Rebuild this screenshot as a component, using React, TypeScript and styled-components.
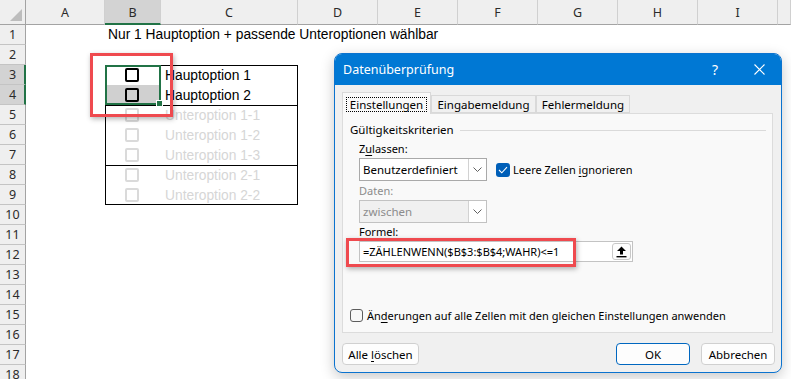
import React from 'react';
import styled, { createGlobalStyle, css } from 'styled-components';

const GlobalStyle = createGlobalStyle`
  html, body { margin: 0; padding: 0; background: #fff; overflow: hidden; }
  #root { width: 791px; height: 379px; }
`;

const Screen = styled.div`
  position: relative;
  width: 791px;
  height: 379px;
  overflow: hidden;
  background: #fff;
`;

/* ---------------- Spreadsheet ---------------- */

const Sheet = styled.div`
  display: grid;
  grid-template-columns: 26px 79px 56px 137px repeat(6, 80px) 1fr;
  grid-template-rows: 25px repeat(18, 20px);
  font-family: "Liberation Sans", Arial, sans-serif;
`;

const headerBase = css`
  box-sizing: border-box;
  display: flex;
  align-items: center;
  justify-content: center;
  font-family: "Noto Sans", "Open Sans", sans-serif;
  font-size: 12.5px;
  color: #2b2b2b;
`;

const Corner = styled.div`
  ${headerBase};
  grid-row: 1;
  grid-column: 1;
  position: relative;
  background: #efefef;
  border-right: 1px solid #a3a3a3;
  border-bottom: 1px solid #a3a3a3;
  &::after {
    content: '';
    position: absolute;
    right: 3px;
    bottom: 3px;
    width: 12px;
    height: 12px;
    background: #bdbdbd;
    clip-path: polygon(100% 0, 100% 100%, 0 100%);
  }
`;

const ColHeader = styled.div<{ $col: number; $active?: boolean }>`
  ${headerBase};
  grid-row: 1;
  grid-column: ${(p) => p.$col};
  background: ${(p) => (p.$active ? '#d3d3d3' : '#efefef')};
  border-right: 1px solid #d0d0d0;
  border-bottom: ${(p) => (p.$active ? '2px solid #217346' : '1px solid #a3a3a3')};
  padding-top: ${(p) => (p.$active ? '1px' : '0')};
`;

const RowHeader = styled.div<{ $row: number; $active?: boolean }>`
  ${headerBase};
  grid-row: ${(p) => p.$row};
  grid-column: 1;
  background: ${(p) => (p.$active ? '#d3d3d3' : '#efefef')};
  border-bottom: 1px solid #c4c4c4;
  border-right: ${(p) => (p.$active ? '2px solid #217346' : '1px solid #a3a3a3')};
  padding-left: ${(p) => (p.$active ? '1px' : '0')};
  font-size: 12.5px;
`;

const TitleCell = styled.div`
  grid-row: 2;
  grid-column: 3;
  white-space: nowrap;
  padding-left: 3px;
  font-size: 13.8px;
  line-height: 20px;
  color: #000;
`;

const TableBlock = styled.div`
  grid-row: 4 / 11;
  grid-column: 3 / 5;
  display: flex;
  flex-direction: column;
  outline: 1px solid #000;
  outline-offset: -1px;
`;

const Group = styled.div<{ $first?: boolean }>`
  display: flex;
  flex-direction: column;
  box-shadow: ${(p) => (p.$first ? 'none' : 'inset 0 1px 0 #000')};
`;

const OptionRow = styled.div`
  display: grid;
  grid-template-columns: 56px 1fr;
  height: 20px;
  align-items: center;
`;

const BoxCell = styled.div<{ $shaded?: boolean }>`
  height: 20px;
  display: flex;
  align-items: center;
  justify-content: center;
  padding-right: 2px;
  box-sizing: border-box;
  background: ${(p) => (p.$shaded ? '#d0d0d0' : 'transparent')};
`;

const FormBox = styled.span<{ $disabled?: boolean }>`
  box-sizing: border-box;
  width: 14px;
  height: 14px;
  border: 2px solid ${(p) => (p.$disabled ? '#dadada' : '#000')};
  border-radius: 2px;
`;

const OptionLabel = styled.span<{ $disabled?: boolean }>`
  padding-left: 4px;
  font-size: 13.8px;
  white-space: nowrap;
  color: ${(p) => (p.$disabled ? '#d6d6d6' : '#000')};
`;

const Selection = styled.div`
  grid-row: 4 / 6;
  grid-column: 3;
  position: relative;
  box-sizing: border-box;
  border: 2px solid #217346;
`;

const FillHandle = styled.span`
  position: absolute;
  right: -4px;
  bottom: -4px;
  width: 5px;
  height: 5px;
  background: #217346;
  border: 1px solid #fff;
`;

/* ---------------- Annotation ---------------- */

const Highlight = styled.div<{ $x: number; $y: number; $w: number; $h: number }>`
  position: absolute;
  left: ${(p) => p.$x}px;
  top: ${(p) => p.$y}px;
  width: ${(p) => p.$w}px;
  height: ${(p) => p.$h}px;
  box-sizing: border-box;
  border: 3px solid #ef4a4f;
  box-shadow: 1px 2px 5px rgba(0, 0, 0, 0.3);
  z-index: 5;
`;

/* ---------------- Dialog ---------------- */

const Dialog = styled.div`
  position: absolute;
  left: 334px;
  top: 53px;
  width: 448px;
  height: 320px;
  box-sizing: border-box;
  border: 1px solid #0b73cf;
  border-radius: 8px;
  overflow: hidden;
  background: #f0f0f0;
  display: flex;
  flex-direction: column;
  font-family: "Noto Sans", "Open Sans", sans-serif;
  font-size: 11px;
  color: #000;
  box-shadow: 0 4px 14px rgba(0, 0, 0, 0.22);
  z-index: 4;
`;

const TitleBar = styled.div`
  height: 31px;
  flex: none;
  background: #0078d4;
  color: #fff;
  display: flex;
  align-items: center;
  padding-left: 8px;
  font-size: 12.5px;
`;

const TitleText = styled.span`
  flex: 1;
`;

const TitleButton = styled.span`
  width: 44px;
  height: 31px;
  display: flex;
  align-items: center;
  justify-content: center;
  font-size: 14px;
  color: #fff;
`;

const DialogBody = styled.div`
  flex: 1;
  display: flex;
  flex-direction: column;
  padding: 7px 6px 0 7px;
`;

const TabStrip = styled.div`
  display: flex;
  align-items: flex-end;
  height: 21px;
  position: relative;
  z-index: 1;
`;

const Tab = styled.div<{ $active?: boolean; $w: number }>`
  box-sizing: border-box;
  width: ${(p) => p.$w}px;
  height: ${(p) => (p.$active ? '22px' : '18px')};
  margin-bottom: ${(p) => (p.$active ? '-1px' : '0')};
  background: ${(p) => (p.$active ? '#f9f9f9' : '#f0f0f0')};
  border: 1px solid #d9d9d9;
  border-bottom: ${(p) => (p.$active ? 'none' : '1px solid #d9d9d9')};
  display: flex;
  align-items: ${(p) => (p.$active ? 'flex-start' : 'center')};
  justify-content: center;
  padding-top: ${(p) => (p.$active ? '4px' : '0')};
  font-size: 11.5px;
  white-space: nowrap;
`;

const FocusLabel = styled.span`
  border: 1px dotted #000;
  padding: 0 3px;
  line-height: 13px;
`;

const Panel = styled.div`
  box-sizing: border-box;
  width: 431px;
  height: 220px;
  background: #f9f9f9;
  border: 1px solid #dcdcdc;
  display: flex;
  flex-direction: column;
  padding: 0 6px 0 7px;
`;

const GroupHeader = styled.div`
  margin-top: 8px;
  display: flex;
  align-items: center;
  gap: 6px;
  line-height: 16px;
  font-size: 11.5px;
`;

const GroupLine = styled.span`
  flex: 1;
  height: 1px;
  background: #dadada;
`;

const Fields = styled.div`
  display: flex;
  flex-direction: column;
  padding-left: 9px;
`;

const FieldLabel = styled.div<{ $disabled?: boolean; $mt: number }>`
  margin-top: ${(p) => p.$mt}px;
  line-height: 16px;
  color: ${(p) => (p.$disabled ? '#8c8c8c' : '#000')};
`;

const FieldRow = styled.div`
  display: flex;
  align-items: center;
  gap: 9px;
  margin-top: 1px;
`;

const Select = styled.div<{ $disabled?: boolean; $h: number }>`
  box-sizing: border-box;
  width: 128px;
  height: ${(p) => p.$h}px;
  display: flex;
  align-items: stretch;
  border: 1px solid ${(p) => (p.$disabled ? '#c2c2c2' : '#a9a9a9')};
  background: ${(p) => (p.$disabled ? '#f0f0f0' : '#fff')};
  color: ${(p) => (p.$disabled ? '#8c8c8c' : '#000')};
`;

const SelectValue = styled.span`
  flex: 1;
  display: flex;
  align-items: center;
  padding-left: 3px;
  font-size: 11.5px;
`;

const SelectButton = styled.span`
  width: 17px;
  display: flex;
  align-items: center;
  justify-content: center;
  border-left: 1px solid #d2d2d2;
  background: #fff;
`;

const CheckLine = styled.label`
  display: flex;
  align-items: center;
  gap: 3px;
  white-space: nowrap;
  font-size: 11px;
`;

const CheckedBox = styled.span`
  width: 14px;
  height: 14px;
  border-radius: 3px;
  background: #005fb8;
  display: flex;
  align-items: center;
  justify-content: center;
`;

const EmptyBox = styled.span`
  box-sizing: border-box;
  width: 13px;
  height: 13px;
  border-radius: 3px;
  border: 1px solid #5d5d5d;
  background: #f7f7f7;
`;

const FormulaInput = styled.div`
  box-sizing: border-box;
  width: 274px;
  height: 21px;
  margin-top: 1px;
  border: 1px solid #c3c3c3;
  background: #fff;
  display: flex;
  align-items: center;
  padding: 0 1px 0 3px;
  font-size: 11px;
  white-space: nowrap;
`;

const FormulaText = styled.span`
  flex: 1;
`;

const CollapseButton = styled.span`
  box-sizing: border-box;
  width: 19px;
  height: 17px;
  border: 1px solid #c8c8c8;
  border-radius: 3px;
  background: #fdfdfd;
  display: flex;
  align-items: center;
  justify-content: center;
`;

const Spacer = styled.div`
  flex: 1;
`;

const BottomCheck = styled(CheckLine)`
  gap: 4px;
  margin-bottom: 9px;
`;

const ButtonRow = styled.div`
  display: flex;
  align-items: center;
  gap: 11px;
  margin-top: 10px;
  height: 22px;
`;

const Button = styled.button<{ $w: number; $primary?: boolean }>`
  box-sizing: border-box;
  width: ${(p) => p.$w}px;
  height: 22px;
  padding: 0;
  border: 1px solid ${(p) => (p.$primary ? '#0067c0' : '#d0d0d0')};
  border-radius: 4px;
  background: #fdfdfd;
  font-family: inherit;
  font-size: 11.5px;
  color: #000;
  &:first-child {
    margin-right: auto;
  }
`;

const Mn = styled.span`
  text-decoration: underline;
  text-underline-offset: 2px;
`;

const Chevron = ({ color = '#606060' }: { color?: string }) => (
  <svg width="9" height="5" viewBox="0 0 9 5">
    <path d="M0.5 0.5 L4.5 4.5 L8.5 0.5" fill="none" stroke={color} strokeWidth="1" />
  </svg>
);

const columns = ['A', 'B', 'C', 'D', 'E', 'F', 'G', 'H', 'I', ''];

const options = [
  [
    { label: 'Hauptoption 1', disabled: false, shaded: false },
    { label: 'Hauptoption 2', disabled: false, shaded: true },
  ],
  [
    { label: 'Unteroption 1-1', disabled: true, shaded: false },
    { label: 'Unteroption 1-2', disabled: true, shaded: false },
    { label: 'Unteroption 1-3', disabled: true, shaded: false },
  ],
  [
    { label: 'Unteroption 2-1', disabled: true, shaded: false },
    { label: 'Unteroption 2-2', disabled: true, shaded: false },
  ],
];

export default function App() {
  const rows = Array.from({ length: 18 }, (_, i) => i + 1);
  return (
    <Screen>
      <GlobalStyle />
      <Sheet>
        <Corner />
        {columns.map((c, i) => (
          <ColHeader key={i} $col={i + 2} $active={c === 'B'}>
            {c}
          </ColHeader>
        ))}
        {rows.map((r) => (
          <RowHeader key={r} $row={r + 1} $active={r === 3 || r === 4}>
            {r}
          </RowHeader>
        ))}
        <TitleCell>Nur 1 Hauptoption + passende Unteroptionen wählbar</TitleCell>
        <TableBlock>
          {options.map((g, gi) => (
            <Group key={gi} $first={gi === 0}>
              {g.map((o) => (
                <OptionRow key={o.label}>
                  <BoxCell $shaded={o.shaded}>
                    <FormBox $disabled={o.disabled} />
                  </BoxCell>
                  <OptionLabel $disabled={o.disabled}>{o.label}</OptionLabel>
                </OptionRow>
              ))}
            </Group>
          ))}
        </TableBlock>
        <Selection>
          <FillHandle />
        </Selection>
      </Sheet>

      <Highlight $x={90} $y={53} $w={83} $h={64} />

      <Dialog>
        <TitleBar>
          <TitleText>Datenüberprüfung</TitleText>
          <TitleButton>?</TitleButton>
          <TitleButton>
            <svg width="11" height="11" viewBox="0 0 11 11">
              <path d="M0.5 0.5 L10.5 10.5 M10.5 0.5 L0.5 10.5" stroke="#fff" strokeWidth="1.1" />
            </svg>
          </TitleButton>
        </TitleBar>
        <DialogBody>
          <TabStrip>
            <Tab $active $w={89}>
              <FocusLabel>Einstellungen</FocusLabel>
            </Tab>
            <Tab $w={105}>Eingabemeldung</Tab>
            <Tab $w={94}>Fehlermeldung</Tab>
          </TabStrip>
          <Panel>
            <GroupHeader>
              <span>Gültigkeitskriterien</span>
              <GroupLine />
            </GroupHeader>
            <Fields>
              <FieldLabel $mt={3}>
                Z<Mn>u</Mn>lassen:
              </FieldLabel>
              <FieldRow>
                <Select $h={23}>
                  <SelectValue>Benutzerdefiniert</SelectValue>
                  <SelectButton>
                    <Chevron />
                  </SelectButton>
                </Select>
                <CheckLine>
                  <CheckedBox>
                    <svg width="10" height="8" viewBox="0 0 10 8">
                      <path d="M1 4 L3.8 6.8 L9 1.2" fill="none" stroke="#fff" strokeWidth="1.1" />
                    </svg>
                  </CheckedBox>
                  <span>
                    Leere Zellen <Mn>i</Mn>gnorieren
                  </span>
                </CheckLine>
              </FieldRow>
              <FieldLabel $mt={2} $disabled>
                Daten:
              </FieldLabel>
              <FieldRow>
                <Select $h={23} $disabled>
                  <SelectValue>zwischen</SelectValue>
                  <SelectButton>
                    <Chevron />
                  </SelectButton>
                </Select>
              </FieldRow>
              <FieldLabel $mt={1}>Formel:</FieldLabel>
              <FormulaInput>
                <FormulaText>=ZÄHLENWENN($B$3:$B$4;WAHR)&lt;=1</FormulaText>
                <CollapseButton>
                  <svg width="11" height="12" viewBox="0 0 11 12">
                    <path d="M5.5 0.5 L10 5 L7 5 L7 8.5 L4 8.5 L4 5 L1 5 Z" fill="#000" />
                    <rect x="0.5" y="10" width="10" height="1.4" fill="#000" />
                  </svg>
                </CollapseButton>
              </FormulaInput>
            </Fields>
            <Spacer />
            <BottomCheck>
              <EmptyBox />
              <span>
                Än<Mn>d</Mn>erungen auf alle Zellen mit den gleichen Einstellungen anwenden
              </span>
            </BottomCheck>
          </Panel>
          <ButtonRow>
            <Button $w={77}>
              Alle <Mn>l</Mn>öschen
            </Button>
            <Button $w={74} $primary>
              OK
            </Button>
            <Button $w={74}>Abbrechen</Button>
          </ButtonRow>
        </DialogBody>
      </Dialog>

      <Highlight $x={346} $y={238} $w={230} $h={29} />
    </Screen>
  );
}
